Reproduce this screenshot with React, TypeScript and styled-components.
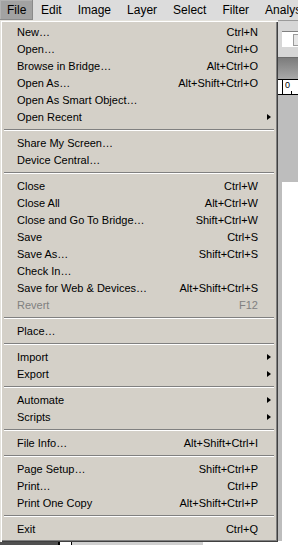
import styled, { createGlobalStyle, css } from 'styled-components';

type Entry =
  | { kind: 'item'; label: string; shortcut?: string; submenu?: boolean; disabled?: boolean }
  | { kind: 'sep' };

const item = (label: string, shortcut?: string, extra?: { submenu?: boolean; disabled?: boolean }): Entry => ({
  kind: 'item',
  label,
  shortcut,
  ...extra,
});
const sep: Entry = { kind: 'sep' };

const FILE_MENU: Entry[] = [
  item('New…', 'Ctrl+N'),
  item('Open…', 'Ctrl+O'),
  item('Browse in Bridge…', 'Alt+Ctrl+O'),
  item('Open As…', 'Alt+Shift+Ctrl+O'),
  item('Open As Smart Object…'),
  item('Open Recent', undefined, { submenu: true }),
  sep,
  item('Share My Screen…'),
  item('Device Central…'),
  sep,
  item('Close', 'Ctrl+W'),
  item('Close All', 'Alt+Ctrl+W'),
  item('Close and Go To Bridge…', 'Shift+Ctrl+W'),
  item('Save', 'Ctrl+S'),
  item('Save As…', 'Shift+Ctrl+S'),
  item('Check In…'),
  item('Save for Web & Devices…', 'Alt+Shift+Ctrl+S'),
  item('Revert', 'F12', { disabled: true }),
  sep,
  item('Place…'),
  sep,
  item('Import', undefined, { submenu: true }),
  item('Export', undefined, { submenu: true }),
  sep,
  item('Automate', undefined, { submenu: true }),
  item('Scripts', undefined, { submenu: true }),
  sep,
  item('File Info…', 'Alt+Shift+Ctrl+I'),
  sep,
  item('Page Setup…', 'Shift+Ctrl+P'),
  item('Print…', 'Ctrl+P'),
  item('Print One Copy', 'Alt+Shift+Ctrl+P'),
  sep,
  item('Exit', 'Ctrl+Q'),
];

const MENU_TITLES = ['File', 'Edit', 'Image', 'Layer', 'Select', 'Filter', 'Analysis'];

const GlobalStyle = createGlobalStyle`
  html, body {
    margin: 0;
    padding: 0;
    background: #ffffff;
  }
  body {
    font-family: 'Liberation Sans', Arial, sans-serif;
    font-size: 11px;
    color: #000;
  }
`;

const Screen = styled.div`
  position: relative;
  width: 298px;
  height: 545px;
  overflow: hidden;
  display: flex;
  flex-direction: column;
`;

const MenuBar = styled.div`
  height: 20px;
  display: flex;
  align-items: stretch;
  background: #dcdcdc;
  white-space: nowrap;
`;

const MenuTitle = styled.div<{ $active?: boolean }>`
  flex-shrink: 0;
  display: flex;
  align-items: center;
  padding: 0 8px 1px 8px;
  font-size: 12px;
  ${({ $active }) =>
    $active &&
    css`
      width: 33px;
      box-sizing: border-box;
      padding: 0 0 1px 7px;
      background: #a2a2a2;
      box-shadow: inset -1px -1px 0 #8a8a8a, inset 1px 1px 0 #b2b2b2;
    `}
`;

const Workspace = styled.div`
  flex: 1;
  display: flex;
  flex-direction: column;
`;

const OptionsBar = styled.div`
  height: 37px;
  background: #d6d6d6;
  border-top: 1px solid #9a9a9a;
  box-sizing: border-box;
  display: flex;
  flex-direction: column;
  justify-content: center;
  padding-left: 282px;
`;

const OptionsField = styled.div`
  height: 15px;
  background: #fff;
  border-top: 1px solid #808080;
  display: flex;
  justify-content: flex-end;
  align-items: center;
`;

const FieldButton = styled.div`
  width: 4px;
  height: 10px;
  border: 1px solid #9a9a9a;
  border-right: none;
  background: #e6e6e6;
`;

const TabBar = styled.div`
  height: 22px;
  background: linear-gradient(#7c7c7c, #a9a9a9);
  border-top: 1px solid #6c6c6c;
  box-sizing: border-box;
`;

const Ruler = styled.div`
  height: 16px;
  background: #fff;
  border-top: 1px solid #000;
  border-bottom: 1px solid #000;
  box-sizing: border-box;
  display: flex;
  align-items: stretch;
  padding-left: 282px;
`;

const RulerZero = styled.div`
  position: relative;
  border-left: 1px solid #000;
  padding-left: 2px;
  font-size: 9px;
  line-height: 10px;
  width: 14px;

  &::after {
    content: '';
    position: absolute;
    left: 8px;
    bottom: 0;
    width: 1px;
    height: 3px;
    background: #000;
  }
`;

const Pasteboard = styled.div`
  flex: 1;
  background: #bdbdbd;
  display: flex;
  flex-direction: column;
  padding-top: 87px;
`;

const Canvas = styled.div`
  flex: 1;
  margin-left: 282px;
  background: #fff;
`;

const StatusBar = styled.div`
  height: 4px;
  display: flex;
  background: #fff;
`;

const StatusPart = styled.div<{ $w: number; $tone: 'dark' | 'light' | 'white' }>`
  width: ${({ $w }) => $w}px;
  ${({ $tone }) =>
    $tone === 'dark'
      ? css`
          background: #505050;
        `
      : $tone === 'light'
        ? css`
            background: #d0d0d0;
            border-top: 1px solid #404040;
            box-sizing: border-box;
          `
        : css`
            background: #fff;
            border-left: 2px solid #000;
            border-right: 1px solid #000;
            box-sizing: border-box;
          `}
`;

const Dropdown = styled.div`
  position: absolute;
  top: 20px;
  left: 0;
  width: 278px;
  background: #d4d0c8;
  padding: 3px 2px 5px 2px;
  box-sizing: border-box;
  box-shadow:
    inset 1px 1px 0 #e4e2dc,
    inset 2px 2px 0 #ffffff,
    inset -1px -1px 0 #404040,
    inset -2px -2px 0 #808080;
  display: flex;
  flex-direction: column;
`;

const Row = styled.div<{ $disabled?: boolean }>`
  height: 17px;
  display: grid;
  grid-template-columns: 1fr auto 18px;
  align-items: center;
  padding-left: 15px;
  white-space: nowrap;
  color: ${({ $disabled }) => ($disabled ? '#808080' : '#000')};
`;

const Shortcut = styled.span`
  text-align: right;
`;

const Arrow = styled.span`
  justify-self: start;
  margin-left: 9px;
  width: 0;
  height: 0;
  border-top: 3.5px solid transparent;
  border-bottom: 3.5px solid transparent;
  border-left: 4px solid #000;
`;

const Separator = styled.div`
  height: 9px;
  display: flex;
  align-items: flex-start;
  padding: 4px 2px 0 2px;
  box-sizing: border-box;

  &::before {
    content: '';
    flex: 1;
    height: 0;
    border-top: 1px solid #808080;
    border-bottom: 1px solid #ffffff;
  }
`;

export default function App() {
  return (
    <>
      <GlobalStyle />
      <Screen>
        <MenuBar>
          {MENU_TITLES.map((t, i) => (
            <MenuTitle key={t} $active={i === 0}>
              {t}
            </MenuTitle>
          ))}
        </MenuBar>
        <Workspace>
          <OptionsBar>
            <OptionsField>
              <FieldButton />
            </OptionsField>
          </OptionsBar>
          <TabBar />
          <Ruler>
            <RulerZero>0</RulerZero>
          </Ruler>
          <Pasteboard>
            <Canvas />
            <StatusBar>
              <StatusPart $w={58} $tone='dark' />
              <StatusPart $w={14} $tone='white' />
              <StatusPart $w={131} $tone='light' />
            </StatusBar>
          </Pasteboard>
        </Workspace>
        <Dropdown>
          {FILE_MENU.map((e, i) =>
            e.kind === 'sep' ? (
              <Separator key={i} />
            ) : (
              <Row key={i} $disabled={e.disabled}>
                <span>{e.label}</span>
                <Shortcut>{e.shortcut}</Shortcut>
                {e.submenu ? <Arrow /> : <span />}
              </Row>
            ),
          )}
        </Dropdown>
      </Screen>
    </>
  );
}
